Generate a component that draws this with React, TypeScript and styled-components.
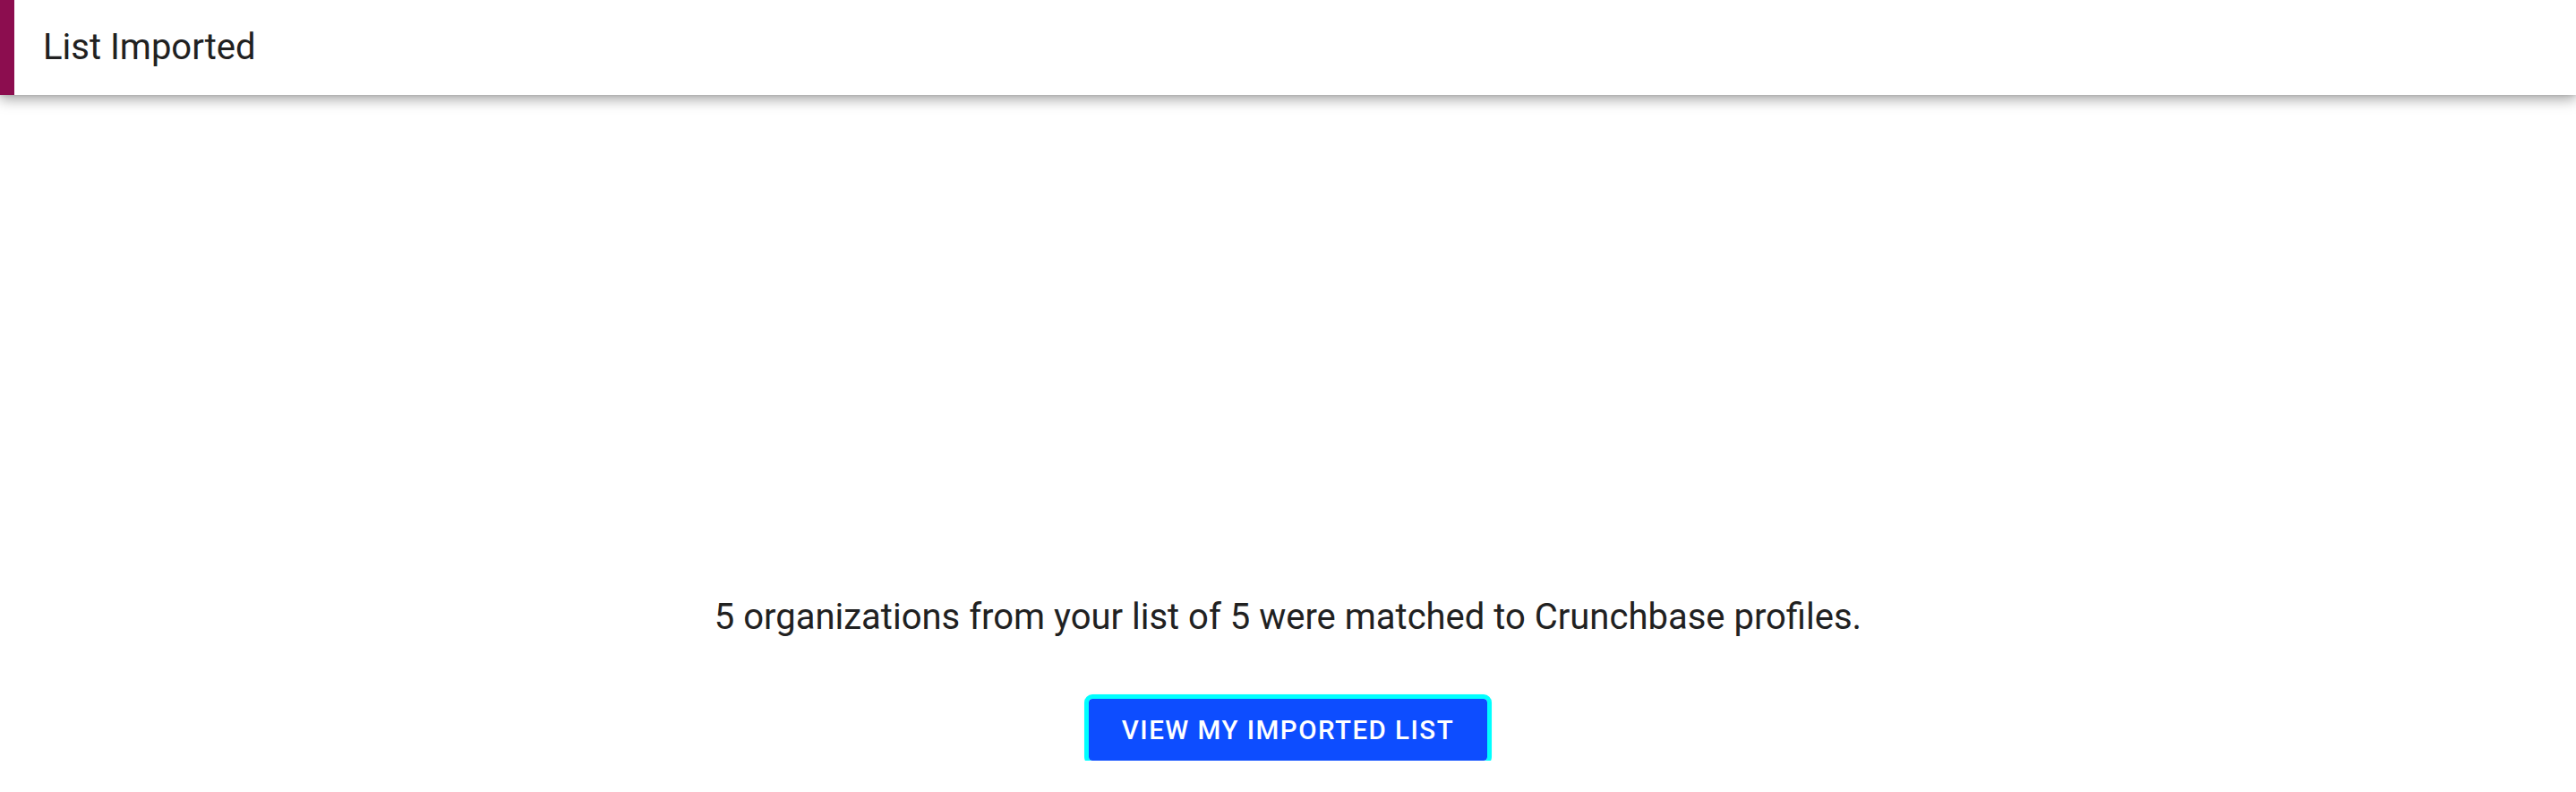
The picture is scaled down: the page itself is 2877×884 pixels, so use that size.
import styled, { createGlobalStyle } from "styled-components";

const GlobalStyle = createGlobalStyle`
    html, body {
        margin: 0;
        padding: 0;
        background: #ffffff;
    }
    body {
        font-family: Roboto, "Liberation Sans", sans-serif;
        color: #212121;
    }
`

const Header = styled.header`
    display: flex;
    align-items: center;
    height: 106px;
    border-left: 16px solid #8c0d4f;
    background: #ffffff;
    box-shadow: 0 5px 14px rgba(0, 0, 0, 0.35), 0 0 4px rgba(0, 0, 0, 0.15);
    padding-left: 32px;
    box-sizing: border-box;
`

const Title = styled.h1`
    margin: 0;
    font-size: 40px;
    font-weight: 400;
    line-height: 1;
    color: #212121;
`

const Main = styled.main`
    display: flex;
    flex-direction: column;
    align-items: center;
    padding-top: 553px;
`

const Message = styled.p`
    margin: 0;
    font-size: 40px;
    line-height: 60px;
    color: #212121;
`

const Button = styled.button`
    margin-top: 61px;
    height: 69px;
    padding: 0 37px;
    border: none;
    border-radius: 4px;
    background: #0d4dff;
    color: #ffffff;
    font-family: Roboto, "Liberation Sans", sans-serif;
    font-size: 29.5px;
    font-weight: 500;
    letter-spacing: 0.05em;
    text-transform: uppercase;
    outline: 5px solid #00ffff;
    box-shadow: 0 0 10px rgba(0, 0, 0, 0.12);
    cursor: pointer;
`

export default function App() {
    return (
        <>
            <GlobalStyle/>
            <Header>
                <Title>List Imported</Title>
            </Header>
            <Main>
                <Message>5 organizations from your list of 5 were matched to Crunchbase profiles.</Message>
                <Button>View my imported list</Button>
            </Main>
        </>
    );
}
